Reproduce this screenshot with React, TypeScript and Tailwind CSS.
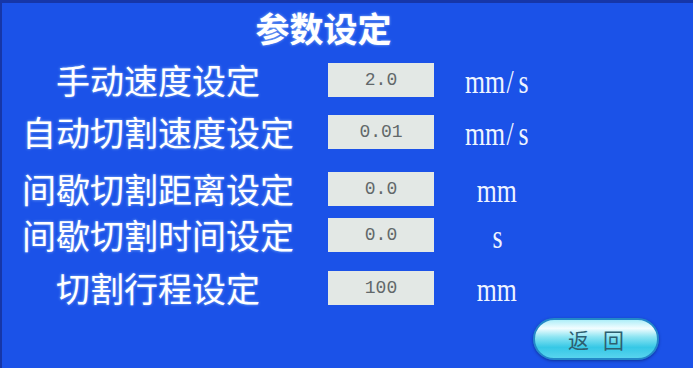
const rows = [
  { label: '手动速度设定', value: '2.0', unit: 'mm/s', mt: 'mt-0' },
  { label: '自动切割速度设定', value: '0.01', unit: 'mm/s', mt: 'mt-[18px]' },
  { label: '间歇切割距离设定', value: '0.0', unit: 'mm', mt: 'mt-[23px]' },
  { label: '间歇切割时间设定', value: '0.0', unit: 's', mt: 'mt-[12px]' },
  { label: '切割行程设定', value: '100', unit: 'mm', mt: 'mt-[19px]' },
]

function Unit({ unit }: { unit: string }) {
  const [a, b] = unit.split('/')
  if (b === undefined) return <>{a}</>
  return (
    <>
      {a}
      <span className="ml-[2px] mr-[6px]">/</span>
      {b}
    </>
  )
}

function ParamRow({ label, value, unit, mt }: { label: string; value: string; unit: string; mt: string }) {
  return (
    <div className={`flex h-[34px] items-center ${mt}`}>
      <div className="w-[312px] text-center text-[34px] leading-none [text-shadow:0_0_3px_rgba(190,225,255,0.7)]">
        {label}
      </div>
      <div className="ml-[14px] flex h-[34px] w-[106px] items-center justify-center bg-[#e3e8e5] font-['Liberation_Mono',monospace] text-[18px] text-[#62686a]">
        {value}
      </div>
      <div className="flex w-[126px] justify-center pt-[4px]">
        <span className="inline-block scale-x-[0.78] font-['Liberation_Serif',serif] text-[33px] leading-none text-[#eef4ff]">
          <Unit unit={unit} />
        </span>
      </div>
    </div>
  )
}

export default function App() {
  return (
    <div className="h-[368px] w-[693px] overflow-hidden border-t-[3px] border-l-[2px] border-[#1636a8] bg-[#1b52e8] font-['Noto_Sans_CJK_SC',sans-serif] text-white">
      <div className="h-[60px] pt-[8px] pr-[48px] text-center text-[34px] font-bold leading-none [text-shadow:0_0_3px_rgba(190,225,255,0.7)]">
        参数设定
      </div>
      {rows.map((r) => (
        <ParamRow key={r.label} {...r} />
      ))}
      <div className="mt-[13px] flex justify-end pr-[34px]">
        <button className="flex h-[42px] w-[126px] items-center justify-center rounded-full border-2 border-[#2388c8] bg-[linear-gradient(to_bottom,#aeeef8_0%,#f2fdff_22%,#8ae4f2_45%,#36c8e6_72%,#58d4ee_100%)] text-[21px] leading-none tracking-[14px] text-[#2d5f70] shadow-[0_1px_3px_rgba(0,20,80,0.5)]">
          <span className="pl-[14px]">返回</span>
        </button>
      </div>
    </div>
  )
}
